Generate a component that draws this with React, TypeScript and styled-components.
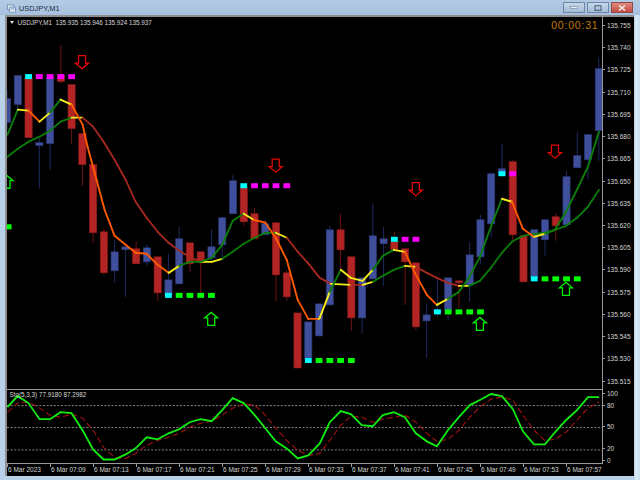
import React from "react";
import styled, { createGlobalStyle } from "styled-components";

const Global = createGlobalStyle`
  html, body { margin: 0; padding: 0; width: 640px; height: 480px; overflow: hidden; background: #c4daf0; }
  #root { width: 640px; height: 480px; }
`;

const Window = styled.div`
  width: 640px;
  height: 480px;
  display: flex;
  flex-direction: column;
  background: linear-gradient(90deg, #b9d0e9 0, #b9d0e9 634px, #dcebf8 636px, #c9def2 640px);
  font-family: "Liberation Sans", Arial, sans-serif;
`;

const TitleBar = styled.div`
  height: 15px;
  flex: none;
  display: flex;
  align-items: center;
  padding: 2px 7px 0 7px;
  box-sizing: border-box;
  background: linear-gradient(180deg, #b3cbe5 0, #a6c1de 100%);
`;

const TitleIcon = styled.svg`
  width: 9px;
  height: 9px;
  flex: none;
  margin-right: 3px;
`;

const TitleText = styled.span`
  font-size: 7.4px;
  color: #1f2a38;
  flex: 1;
`;

const WinButtons = styled.div`
  display: flex;
  gap: 1.5px;
  margin-top: -2px;
`;

const WinButton = styled.div<{ $close?: boolean }>`
  width: 20.5px;
  height: 9px;
  border: 0.5px solid ${(p) => (p.$close ? "#8c4a4a" : "#6f87a5")};
  box-sizing: content-box;
  background: ${(p) =>
    p.$close
      ? "linear-gradient(180deg,#e08a80,#c44d40)"
      : "linear-gradient(180deg,#c6d8ea,#a3bcd6)"};
  display: flex;
  align-items: center;
  justify-content: center;
`;

const Frame = styled.div`
  width: 629px;
  height: 461px;
  margin-left: 5px;
  flex: none;
  box-sizing: border-box;
  background: #000;
  border-left: 2.5px solid #8e8e8e;
  border-top: 2.5px solid #8e8e8e;
  display: grid;
  grid-template-columns: 596px 1fr;
  grid-template-rows: 372.5px 74px 1fr;
  color: #cfcfcf;
`;

const Plot = styled.div`
  position: relative;
  min-width: 0;
  min-height: 0;
  border-right: 1.5px solid #9a9a9a;
  border-bottom: 1.5px solid #9a9a9a;
`;

const ChartSvg = styled.svg`
  display: block;
  width: 100%;
  height: 100%;
`;

const Legend = styled.div`
  position: absolute;
  top: 0.5px;
  left: 2.5px;
  font-size: 6.3px;
  line-height: 9px;
  white-space: pre;
  display: flex;
  align-items: center;
  gap: 4px;
  color: #d8d8d8;
`;

const Caret = styled.span`
  width: 0;
  height: 0;
  border-left: 2.5px solid transparent;
  border-right: 2.5px solid transparent;
  border-top: 3px solid #ddd;
`;

const SubLegend = styled(Legend)`
  top: 0.5px;
  left: 2.5px;
`;

const Countdown = styled.div`
  position: absolute;
  top: 1.5px;
  right: 3.5px;
  font-size: 10.5px;
  line-height: 12px;
  letter-spacing: 0.8px;
  color: #c47a08;
`;

const PriceAxis = styled.div`
  margin-top: -2.6px;
  display: flex;
  flex-direction: column;
`;

const AxisRow = styled.div<{ $h: number }>`
  height: ${(p) => p.$h}px;
  flex: none;
  display: flex;
  align-items: center;
  gap: 2px;
  font-size: 6.5px;
  color: #d4d4d4;
  white-space: nowrap;
`;

const Tick = styled.span`
  width: 2px;
  height: 1px;
  background: #9a9a9a;
  flex: none;
`;

const SubAxis = styled.div`
  display: flex;
  flex-direction: column;
`;

const TimeAxis = styled.div`
  grid-column: 1 / span 2;
  display: grid;
  grid-auto-flow: column;
  grid-auto-columns: 43px;
  justify-content: start;
  font-size: 6.5px;
  line-height: 10px;
  color: #d4d4d4;
`;

const TimeLabel = styled.div`
  white-space: nowrap;
  padding-top: 1px;
  border-left: 0.8px solid #9a9a9a;
  height: 2px;
`;

// centre of candle n, in page pixels
const cx = (i: number) => 18.3 + 10.75 * i;

type C = [number, number, number, number, number, "b" | "r"];
// index, body top, body bottom, wick top, wick bottom, colour
const candles: C[] = [
  [-1, 99, 123, 90, 130, "b"],
  [0, 76, 105, 76, 110, "b"],
  [1, 78, 138, 76, 138, "r"],
  [2, 143, 146, 138, 189, "b"],
  [3, 78, 144, 76, 170, "b"],
  [4, 76, 82, 46, 84, "r"],
  [5, 85, 129, 85, 144, "r"],
  [6, 134, 165, 134, 186, "r"],
  [7, 165, 233, 165, 243, "r"],
  [8, 232, 273, 229, 275, "r"],
  [9, 252, 271, 240, 283, "b"],
  [10, 247, 250, 247, 297, "b"],
  [11, 249, 264, 242, 264, "r"],
  [12, 248, 262, 245, 266, "b"],
  [13, 257, 293, 257, 301, "r"],
  [14, 280, 295, 254, 295, "b"],
  [15, 239, 284, 227, 284, "b"],
  [16, 243, 264, 243, 272, "r"],
  [17, 252, 263, 252, 294, "r"],
  [18, 247, 258, 230, 262, "b"],
  [19, 218, 245, 217, 261, "b"],
  [20, 181, 214, 175, 214, "b"],
  [21, 188, 222, 186, 226, "r"],
  [22, 214, 239, 208, 239, "r"],
  [23, 224, 235, 220, 235, "b"],
  [24, 223, 275, 223, 301, "r"],
  [25, 273, 297, 271, 301, "r"],
  [26, 313, 368, 313, 368, "r"],
  [27, 322, 358, 322, 358, "b"],
  [28, 304, 336, 304, 336, "b"],
  [29, 230, 305, 226, 305, "b"],
  [30, 230, 250, 214, 270, "r"],
  [31, 257, 318, 257, 331, "r"],
  [32, 278, 318, 278, 334, "b"],
  [33, 236, 279, 204, 279, "b"],
  [34, 239, 244, 227, 286, "b"],
  [35, 242, 250, 232, 250, "r"],
  [36, 249, 262, 249, 305, "r"],
  [37, 263, 327, 263, 330, "r"],
  [38, 315, 321, 304, 358, "b"],
  [39, 310, 312, 278, 317, "b"],
  [40, 278, 310, 278, 320, "b"],
  [41, 281, 283, 280, 308, "r"],
  [42, 255, 285, 242, 302, "b"],
  [43, 220, 257, 215, 264, "b"],
  [44, 174, 224, 174, 238, "b"],
  [45, 169, 176, 144, 176, "b"],
  [46, 162, 235, 160, 242, "r"],
  [47, 236, 282, 236, 282, "r"],
  [48, 230, 278, 230, 278, "b"],
  [49, 220, 240, 220, 256, "b"],
  [50, 217, 226, 214, 241, "r"],
  [51, 177, 225, 171, 228, "b"],
  [52, 156, 168, 132, 168, "b"],
  [53, 135, 160, 135, 179, "b"],
  [54, 69, 131, 58, 161, "b"],
];

// x, y, colour of the segment that ends at this point
type P = [number, number, string?];
const G = "#0b7d0b";
const Y = "#f6ee1c";
const O = "#ff5a00";
const R = "#a8281f";

const fast: P[] = [
  [8, 135], [18.3, 110, G], [29, 111, Y], [40, 122, O], [50.5, 113, Y], [61, 100, G], [72, 105, Y],
  [83, 125, O], [88, 147, O], [97, 180, O], [105, 210, O], [115, 236, O], [126, 245, O], [136, 253, O],
  [147, 254, O], [158, 265, O], [169, 273, O], [179.5, 266, Y], [190, 262, G], [201, 262, G], [212, 258, G],
  [222.5, 245, G], [233, 221, G], [244, 214, G], [254, 220, Y], [265.6, 223, O], [276, 238, O], [287, 260, O],
  [298, 300, O], [308.5, 319, O], [319, 319, O], [320, 318, Y], [330, 292, Y], [341, 270, G], [351, 278, Y],
  [362.7, 281, Y], [373, 270, Y], [383, 256, G], [394, 250, G], [405, 252, Y], [415, 273, O], [427, 295, O],
  [437, 305, O], [448, 299, Y], [459, 292, G], [469, 278, G], [480, 257, G], [491, 227, G], [502, 199, G],
  [512, 202, Y], [523, 229, O], [534, 237, O], [545, 234, Y], [555, 230, G], [566, 212, G], [577, 190, G],
  [588, 167, G], [599, 132, G],
];

const slow: P[] = [
  [8, 157], [18.3, 149, G], [29, 142, G], [40, 137, G], [50.5, 131, G], [61, 122, G], [72, 118, G], [83, 118, Y],
  [93.5, 127, R], [104, 142, R], [115, 160, R], [126, 180, R], [136, 202, R], [147, 218, R], [158, 232, R],
  [169, 243, R], [179.5, 251, R], [190, 257, R], [201, 262, R], [212, 262, Y], [222.5, 259, Y], [233, 252, G],
  [244, 244, G], [255, 238, G], [265.6, 233, G], [276, 233, G], [287, 238, Y], [298, 252, R], [308, 263, R],
  [320, 278, R], [331, 284, R], [351, 285, Y], [362.7, 285, R], [373, 282, Y], [383, 276, G], [394, 270, G],
  [405, 266, G], [416, 267, Y], [427, 273, R], [437, 278, R], [448, 283, R], [459, 286, R], [469, 286, Y],
  [480, 281, G], [491, 268, G], [502, 253, G], [512, 242, G], [523, 236, G], [534, 234, G], [545, 233, G],
  [555, 230, G], [566, 226, G], [577, 218, G], [588, 207, G], [599, 190, G],
];

const stochMain = "8,407 18,396 29,403 40,419 50.5,419 61,412 72,413 83,430 93.5,449 104,459 115,459 126,454 136,448 147,437 158,439 169,433 179.5,429 190,422 201,419 212,421 222.5,410 233,398 244,403 255,415 265.6,428 276,441 287,448 298,458 308.5,455 320,443 330,422 341,411 351,414 362,425 373,426 383,415 394,412 405,417 416,433 427,441 437,446 448,430 459,417 470,405 480,400 491,394 502,396 513,409 523,431 534,444 545,444 555,432 566,420 577,410 588,397 599,397";
const stochSignal = "8,412 18,403 29,402 40,408 50.5,415 61,417 72,414 83,418 93.5,430 104,447 115,457 126,458 136,453 147,445 158,440 169,437 179.5,433 190,427 201,423 212,421 222.5,415 233,408 244,404 255,405 265.6,415 276,428 287,440 298,450 308.5,455 320,453 330,440 341,425 351,416 362,417 373,422 383,419 394,417 405,415 416,422 427,433 437,441 448,439 459,430 470,417 480,407 491,399 502,397 513,400 523,415 534,430 545,440 555,439 566,432 577,420 588,408 599,402";

// marker rows: the first square of each is cyan
const markerRows: { y: number; start: number; count: number; fill: string }[] = [
  { y: 77, start: 1, count: 5, fill: "#ff00ff" },
  { y: 186, start: 21, count: 5, fill: "#ff00ff" },
  { y: 239.5, start: 35, count: 3, fill: "#ff00ff" },
  { y: 174, start: 45, count: 2, fill: "#ff00ff" },
  { y: 295.5, start: 14, count: 5, fill: "#00ff00" },
  { y: 360.5, start: 27, count: 5, fill: "#00ff00" },
  { y: 312, start: 39, count: 5, fill: "#00ff00" },
  { y: 279, start: 48, count: 5, fill: "#00ff00" },
];

const downArrows: [number, number][] = [[82.5, 56], [276, 159.5], [416, 183], [555, 145.5]];
const upArrows: [number, number][] = [[7, 175], [211.5, 312], [480, 317], [566, 282]];

const arrowDown = (x: number, y: number) =>
  `M${x - 3.5} ${y}H${x + 3.5}V${y + 7.5}H${x + 6.5}L${x} ${y + 13}L${x - 6.5} ${y + 7.5}H${x - 3.5}Z`;
const arrowUp = (x: number, y: number) =>
  `M${x - 3.5} ${y + 13.5}H${x + 3.5}V${y + 6}H${x + 6.5}L${x} ${y + 0.5}L${x - 6.5} ${y + 6}H${x - 3.5}Z`;

const Segments = ({ pts, w }: { pts: P[]; w: number }) => (
  <>
    {pts.slice(1).map((p, i) => (
      <line
        key={i}
        x1={pts[i][0]}
        y1={pts[i][1]}
        x2={p[0]}
        y2={p[1]}
        stroke={p[2]}
        strokeWidth={w}
        strokeLinecap="round"
      />
    ))}
  </>
);

const MainChart = () => (
  <ChartSvg viewBox="7.5 17.5 594.5 371" preserveAspectRatio="none">
    {candles.map(([i, , , wt, wb, c]) => (
      <line
        key={i}
        x1={cx(i)}
        x2={cx(i)}
        y1={wt}
        y2={wb}
        stroke={c === "b" ? "#1f2a5e" : "#6e1212"}
        strokeWidth={1}
      />
    ))}
    {candles.map(([i, t, b, , , c]) => (
      <rect
        key={i}
        x={cx(i) - 3.6}
        y={t}
        width={7.2}
        height={b - t}
        fill={c === "b" ? "#3f4f9c" : "#b32425"}
        stroke={c === "b" ? "#2c3873" : "#8a1c1c"}
        strokeWidth={0.6}
      />
    ))}
    <Segments pts={slow} w={1.8} />
    <Segments pts={fast} w={1.9} />
    {markerRows.map((r) =>
      Array.from({ length: r.count }, (_, k) => (
        <rect
          key={`${r.y}-${k}`}
          x={cx(r.start + k) - 3.4}
          y={r.y - 2.5}
          width={6.8}
          height={5}
          fill={k === 0 ? "#00ffff" : r.fill}
        />
      ))
    )}
    <rect x={7.5} y={224.5} width={4.5} height={5} fill="#00ff00" />
    {downArrows.map(([x, y]) => (
      <path key={x} d={arrowDown(x, y)} fill="none" stroke="#e00808" strokeWidth={1.3} />
    ))}
    {upArrows.map(([x, y]) => (
      <path key={x} d={arrowUp(x, y)} fill="none" stroke="#00f000" strokeWidth={1.3} />
    ))}
  </ChartSvg>
);

const SubChart = () => (
  <ChartSvg viewBox="7.5 390 594.5 72.5" preserveAspectRatio="none">
    {[405.5, 427.3, 449.5].map((y) => (
      <line key={y} x1={7.5} x2={602} y1={y} y2={y} stroke="#a8a8a8" strokeWidth={0.8} strokeDasharray="2 1.6" />
    ))}
    <polyline points={stochSignal} fill="none" stroke="#a01212" strokeWidth={1.1} strokeDasharray="6 3" />
    <polyline points={stochMain} fill="none" stroke="#12ee12" strokeWidth={1.8} />
  </ChartSvg>
);

const prices = [
  "135.755", "135.740", "135.725", "135.710", "135.695", "135.680", "135.665", "135.650", "135.635",
  "135.620", "135.605", "135.590", "135.575", "135.560", "135.545", "135.530", "135.515",
];

const subLevels: [string, number][] = [
  ["100", 8],
  ["80", 15.4],
  ["50", 27.8],
  ["20", 16.6],
  ["0", 6.2],
];

const times = [
  "6 Mar 2023", "6 Mar 07:09", "6 Mar 07:13", "6 Mar 07:17", "6 Mar 07:21", "6 Mar 07:25", "6 Mar 07:29",
  "6 Mar 07:33", "6 Mar 07:37", "6 Mar 07:41", "6 Mar 07:45", "6 Mar 07:49", "6 Mar 07:53", "6 Mar 07:57",
];

export default function App() {
  return (
    <Window>
      <Global />
      <TitleBar>
        <TitleIcon viewBox="0 0 10 10">
          <rect x="0.5" y="1" width="6.5" height="5" fill="#dfe9f4" stroke="#5b7fa8" strokeWidth="0.8" />
          <rect x="3" y="3.5" width="6.5" height="5.5" fill="#f2f6fb" stroke="#5b7fa8" strokeWidth="0.8" />
          <path d="M4 6.5H8.5M4 5H8.5" stroke="#7b9cc2" strokeWidth="0.7" />
        </TitleIcon>
        <TitleText>USDJPY,M1</TitleText>
        <WinButtons>
          <WinButton>
            <svg width="8" height="3" viewBox="0 0 8 3"><rect width="7" height="2" x="0.5" y="0.5" fill="#eef3f8" stroke="#5d6f85" strokeWidth="0.5" /></svg>
          </WinButton>
          <WinButton>
            <svg width="8" height="6" viewBox="0 0 8 6"><rect width="6" height="4.5" x="1" y="0.75" fill="none" stroke="#44566c" strokeWidth="1" /></svg>
          </WinButton>
          <WinButton $close>
            <svg width="8" height="6" viewBox="0 0 8 6"><path d="M1 0.5L7 5.5M7 0.5L1 5.5" stroke="#f6ecec" strokeWidth="1.5" /></svg>
          </WinButton>
        </WinButtons>
      </TitleBar>
      <Frame>
        <Plot>
          <MainChart />
          <Legend>
            <Caret />
            {"USDJPY,M1  135.935 135.946 135.924 135.937"}
          </Legend>
          <Countdown>00:00:31</Countdown>
        </Plot>
        <PriceAxis>
          {prices.map((p) => (
            <AxisRow key={p} $h={22.23}>
              <Tick />
              {p}
            </AxisRow>
          ))}
        </PriceAxis>
        <Plot>
          <SubChart />
          <SubLegend>Sto(5,3,3) 77.9180 87.2982</SubLegend>
        </Plot>
        <SubAxis>
          {subLevels.map(([l, h]) => (
            <AxisRow key={l} $h={h}>
              <Tick />
              {l}
            </AxisRow>
          ))}
        </SubAxis>
        <TimeAxis>
          {times.map((t) => (
            <TimeLabel key={t}>{t}</TimeLabel>
          ))}
        </TimeAxis>
      </Frame>
    </Window>
  );
}
